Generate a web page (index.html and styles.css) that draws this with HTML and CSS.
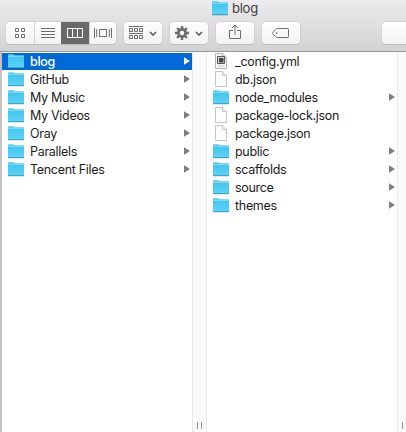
FILE: index.html
```html
<!DOCTYPE html>
<html lang="en">
<head>
<meta charset="utf-8">
<title>blog</title>
<link rel="stylesheet" href="styles.css">
</head>
<body>
<svg class="defs" width="0" height="0">
  <defs>
    <linearGradient id="blue" x1="0" y1="0" x2="0" y2="1"><stop offset="0" stop-color="#40c6f0"/><stop offset="1" stop-color="#62d3f5"/></linearGradient>
    <symbol id="folder" viewBox="0 0 16 15">
      <path d="M0 1Q0 .3.7.3H5.5L7 1.3H15.4Q16 1.3 16 2V14H0Z" fill="#5fcbea"/>
      <path d="M0 3H16V14H0Z" fill="url(#blue)"/>
      <path d="M0 2.5H16" stroke="#7fdcf5" stroke-width=".8"/>
      <path d="M0 13.5H16" stroke="#36a9d0"/>
      <path d="M0 14.5H16" stroke="#000" stroke-opacity=".1"/>
    </symbol>
    <symbol id="doc" viewBox="0 0 16 16">
      <path d="M2.5.5H9.5L13.5 4.5V15.5H2.5Z" fill="#fdfdfd" stroke="#c4c4c4"/>
      <path d="M9.5.5V4.5H13.5" fill="#eee" stroke="#c4c4c4"/>
    </symbol>
    <symbol id="yml" viewBox="0 0 16 16">
      <path d="M2.5.5H9.5L13.5 4.5V15.5H2.5Z" fill="#f3f3f3" stroke="#b4b4b4"/>
      <path d="M9.5.5V4.5H13.5" fill="#ddd" stroke="#b4b4b4"/>
      <path d="M4.5 3.5H11.5V10.5H4.5Z" fill="#ddd" stroke="#555"/>
      <path d="M6 5H10.5V9.5H6Z" fill="#444"/>
      <path d="M5 13H11" stroke="#ccc"/>
    </symbol>
    <symbol id="arrow" viewBox="0 0 6 8"><path d="M0 .2 6 4 0 7.8Z" fill="currentColor"/></symbol>
    <symbol id="chevron" viewBox="0 0 8 5"><path d="M1 1 4 4 7 1" fill="none" stroke="#555" stroke-width="1.5"/></symbol>
  </defs>
</svg>
<div class="window">
  <header class="chrome">
    <div class="title"><svg class="folder"><use href="#folder"/></svg><span>blog</span></div>
    <div class="toolbar">
      <div class="views">
        <div class="seg"><svg width="12" height="12" fill="none" stroke="#6d6d6d"><path d="M1.5 1.5h3v3h-3zM7.5 1.5h3v3h-3zM1.5 7.5h3v3h-3zM7.5 7.5h3v3h-3z"/></svg></div>
        <div class="seg"><svg width="14" height="12" stroke="#6d6d6d"><path d="M0 1.5H14M0 4.5H14M0 7.5H14M0 10.5H14"/></svg></div>
        <div class="seg active"><svg width="16" height="12" fill="none" stroke="#fff"><path d="M.5 1.5h15v9H.5zM5.5 1v10M10.5 1v10"/></svg></div>
        <div class="seg"><svg width="18" height="12" fill="none" stroke="#6d6d6d"><path d="M.5 1v10M2.7 2v8M5.5 2.5h7v7h-7zM15.3 2v8M17.5 1v10"/></svg></div>
      </div>
      <div class="button menu"><svg width="14" height="14" fill="none" stroke="#6d6d6d"><path d="M0 .5H14M0 7.5H14M.5 2.5h3v3h-3zM5.5 2.5h3v3h-3zM10.5 2.5h3v3h-3zM.5 9.5h3v3h-3zM5.5 9.5h3v3h-3zM10.5 9.5h3v3h-3z"/></svg><svg width="8" height="5"><use href="#chevron"/></svg></div>
      <div class="button menu"><svg width="14" height="14" viewBox="-7 -7 14 14"><g stroke="#6d6d6d"><circle r="3.6" fill="none" stroke-width="2.7"/><path d="M0-7V-4M0 4V7M-7 0H-4M4 0H7M-4.9-4.9-3-3M3 3 4.9 4.9M-4.9 4.9-3 3M3-3 4.9-4.9" stroke-width="2.4"/></g></svg><svg width="8" height="5"><use href="#chevron"/></svg></div>
      <div class="button"><svg class="share" width="12" height="16" fill="none" stroke="#6d6d6d"><path d="M4 6.5H.5v8h11v-8H8M6 11V1M3 4 6 1 9 4"/></svg></div>
      <div class="button"><svg class="tag" width="18" height="11" fill="none" stroke="#6d6d6d"><path d="M5.5.5H15.5Q16.5.5 16.5 1.5V8.5Q16.5 9.5 15.5 9.5H5.5Q4.5 9.5 3.5 8.5L.8 5.8Q.2 5 .8 4.2L3.5 1.5Q4.5.5 5.5.5Z"/><circle cx="4.5" cy="5" r=".5"/></svg></div>
      <div class="button search"></div>
    </div>
  </header>
  <main class="browser">
    <section class="column">
      <div class="list">
        <div class="row selected"><svg class="folder"><use href="#folder"/></svg><span>blog</span><svg class="arrow"><use href="#arrow"/></svg></div>
        <div class="row"><svg class="folder"><use href="#folder"/></svg><span>GitHub</span><svg class="arrow"><use href="#arrow"/></svg></div>
        <div class="row"><svg class="folder"><use href="#folder"/></svg><span>My Music</span><svg class="arrow"><use href="#arrow"/></svg></div>
        <div class="row"><svg class="folder"><use href="#folder"/></svg><span>My Videos</span><svg class="arrow"><use href="#arrow"/></svg></div>
        <div class="row"><svg class="folder"><use href="#folder"/></svg><span>Oray</span><svg class="arrow"><use href="#arrow"/></svg></div>
        <div class="row"><svg class="folder"><use href="#folder"/></svg><span>Parallels</span><svg class="arrow"><use href="#arrow"/></svg></div>
        <div class="row"><svg class="folder"><use href="#folder"/></svg><span>Tencent Files</span><svg class="arrow"><use href="#arrow"/></svg></div>
      </div>
      <div class="gutter"><i></i><i></i></div>
    </section>
    <section class="column">
      <div class="list">
        <div class="row"><svg class="doc"><use href="#yml"/></svg><span>_config.yml</span></div>
        <div class="row"><svg class="doc"><use href="#doc"/></svg><span>db.json</span></div>
        <div class="row"><svg class="folder"><use href="#folder"/></svg><span>node_modules</span><svg class="arrow"><use href="#arrow"/></svg></div>
        <div class="row"><svg class="doc"><use href="#doc"/></svg><span>package-lock.json</span></div>
        <div class="row"><svg class="doc"><use href="#doc"/></svg><span>package.json</span></div>
        <div class="row"><svg class="folder"><use href="#folder"/></svg><span>public</span><svg class="arrow"><use href="#arrow"/></svg></div>
        <div class="row"><svg class="folder"><use href="#folder"/></svg><span>scaffolds</span><svg class="arrow"><use href="#arrow"/></svg></div>
        <div class="row"><svg class="folder"><use href="#folder"/></svg><span>source</span><svg class="arrow"><use href="#arrow"/></svg></div>
        <div class="row"><svg class="folder"><use href="#folder"/></svg><span>themes</span><svg class="arrow"><use href="#arrow"/></svg></div>
      </div>
      <div class="gutter"><i></i><i></i></div>
    </section>
  </main>
</div>
</body>
</html>
```
FILE: styles.css
```css
* { box-sizing: border-box; }
body { margin: 0; font: 12.5px/17px Inter, "Liberation Sans", sans-serif; letter-spacing: -.3px; color: #1c1c1c; overflow: hidden; }
svg { display: block; flex: none; }
.defs { position: absolute; }
.window { width: 406px; height: 432px; display: flex; flex-direction: column; overflow: hidden; }
.chrome { height: 52px; flex: none; background: linear-gradient(#edebed, #d3d1d3); border-bottom: 1px solid #99979a; }
.title { display: flex; height: 22px; padding-left: 212px; gap: 4px; color: #3c3c3c; font-size: 13px; letter-spacing: -.25px; }
.title .folder { margin-top: 1px; }
.toolbar { display: flex; gap: 8px; padding-left: 6px; }
.views, .button { height: 22px; flex: none; border-radius: 4px; background: linear-gradient(#fefefe, #f3f3f3); box-shadow: 0 0 0 .5px #c6c4c6, 0 1px 0 #b9b7b9; }
.views { display: flex; width: 110px; overflow: hidden; }
.seg { width: 27px; display: flex; align-items: center; justify-content: center; border-left: 1px solid #d5d3d5; }
.seg:first-child { width: 28px; border-left: 0; }
.seg.active { width: 28px; background: #696969; border: 0; }
.button { width: 38px; display: flex; align-items: center; justify-content: center; }
.menu { gap: 6px; }
.share { margin-top: -2px; }
.search { margin-left: 74px; }
.browser { flex: 1; display: flex; border-left: 2px solid #c4c2c4; }
.column { display: flex; width: 205px; flex: none; background: #fff; }
.list { width: 190px; padding-top: 1px; }
.row { height: 18px; display: flex; align-items: center; padding: 0 2px 0 6px; gap: 6px; border-bottom: 1px solid transparent; background-clip: padding-box; }
.row span { flex: 1; white-space: nowrap; }
.selected { background-color: #0069d9; color: #fff; font-weight: 500; }
.folder { width: 16px; height: 15px; }
.doc { width: 16px; height: 16px; }
.row .doc { margin-top: -1px; }
.arrow { width: 6px; height: 8px; color: #7e7e7e; margin-top: -1px; }
.selected .arrow { color: #fff; }
.gutter { width: 15px; background: #fafafa; border: solid #e9e9e9; border-width: 0 1px; display: flex; justify-content: center; align-items: flex-end; gap: 3px; padding-bottom: 3px; }
.gutter i { width: 1px; height: 7px; background: #929292; }
```
